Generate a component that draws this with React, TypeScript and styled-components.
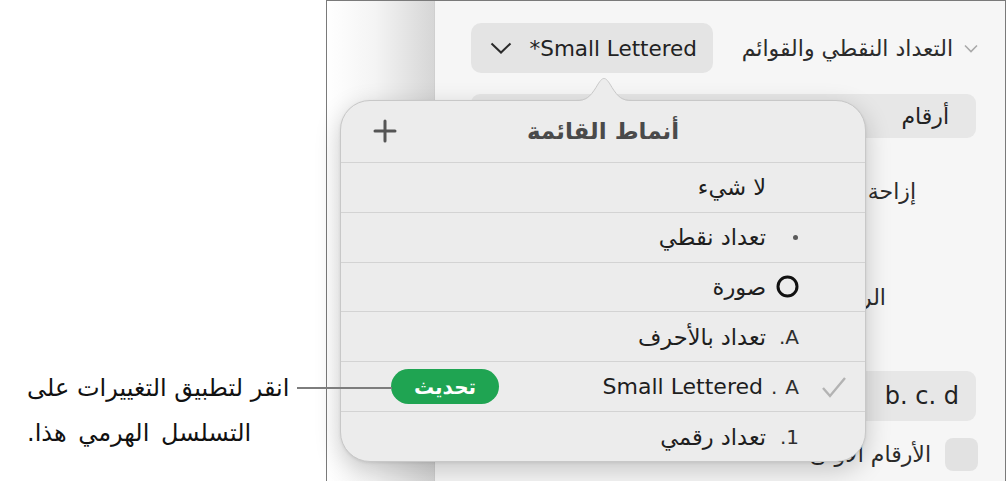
import React from "react";
import styled, { createGlobalStyle } from "styled-components";

const FONT = `"DejaVu Sans", "Noto Sans", sans-serif`;

const GlobalStyle = createGlobalStyle`
  html, body {
    margin: 0;
    padding: 0;
    background: #ffffff;
  }
  body {
    font-family: ${FONT};
    -webkit-font-smoothing: antialiased;
  }
`;

const Page = styled.div`
  position: relative;
  width: 1007px;
  height: 481px;
  display: flex;
  overflow: hidden;
  background: #ffffff;
`;

const Callout = styled.div`
  width: 326px;
  flex-shrink: 0;
  box-sizing: border-box;
  padding: 366px 0 0 27px;
`;

const CalloutText = styled.div`
  direction: rtl;
  text-align: left;
  white-space: nowrap;
  font-size: 24px;
  line-height: 45px;
  color: #111111;
`;

const CalloutLine = styled.span<{ $spread?: number }>`
  word-spacing: ${(p) => p.$spread ?? 0}px;
`;

const LeaderLine = styled.div`
  position: absolute;
  left: 297px;
  top: 387px;
  width: 95px;
  height: 1.5px;
  background: #7d7d7d;
  z-index: 5;
`;

const Frame = styled.div`
  position: relative;
  width: 680px;
  height: 481px;
  flex-shrink: 0;
  box-sizing: border-box;
  border: 1px solid #7a7a7a;
  border-bottom: none;
  display: flex;
`;

const Shade = styled.div`
  width: 107px;
  flex-shrink: 0;
  background: linear-gradient(to right, #ffffff 0%, #f4f4f4 45%, #d6d6d6 100%);
`;

const Inspector = styled.div`
  flex: 1;
  box-sizing: border-box;
  background: #f6f6f6;
  border-left: 1px solid #cfcfcf;
  padding: 22px 27px 0 36px;
  display: flex;
  flex-direction: column;
`;

const HeaderRow = styled.div`
  direction: rtl;
  height: 50px;
  display: flex;
  align-items: center;
`;

const SectionTitle = styled.div`
  margin-right: 11px;
  font-size: 22px;
  color: #2b2b2b;
  white-space: nowrap;
`;

const PopupButton = styled.div`
  margin-right: auto;
  width: 242px;
  height: 50px;
  box-sizing: border-box;
  border-radius: 10px;
  background: #e4e4e4;
  display: flex;
  align-items: center;
  justify-content: space-between;
  padding: 0 16px 0 19px;
  font-size: 21.5px;
  color: #222222;
`;

const LatinText = styled.span`
  direction: ltr;
  unicode-bidi: isolate;
  white-space: pre;
`;

const FieldButton = styled.div<{ $top: number; $height: number; $pad: number; $size: number }>`
  margin-top: ${(p) => p.$top}px;
  margin-right: 2px;
  height: ${(p) => p.$height}px;
  border-radius: 9px;
  background: #e7e7e7;
  display: flex;
  align-items: center;
  justify-content: flex-end;
  padding-right: ${(p) => p.$pad}px;
  font-size: ${(p) => p.$size}px;
  color: #222222;
`;

const LabelRow = styled.div<{ $top: number; $pad: number }>`
  margin-top: ${(p) => p.$top}px;
  height: 50px;
  direction: rtl;
  display: flex;
  align-items: center;
  padding-right: ${(p) => p.$pad}px;
  font-size: 22px;
  color: #2b2b2b;
`;

const CheckRow = styled.div`
  margin-top: 17px;
  height: 33px;
  direction: rtl;
  display: flex;
  align-items: center;
  gap: 14px;
  font-size: 22px;
  color: #2b2b2b;
`;

const CheckBox = styled.div`
  width: 33px;
  height: 33px;
  border-radius: 8px;
  background: #e2e2e2;
`;

const Popover = styled.div`
  position: absolute;
  left: 13px;
  top: 99px;
  width: 526px;
  height: 362px;
  box-sizing: border-box;
  border-radius: 30px;
  background: #ececec;
  border: 1px solid #c8c8c8;
  box-shadow: 0 8px 26px rgba(0, 0, 0, 0.2), 0 1px 3px rgba(0, 0, 0, 0.08);
  display: flex;
  flex-direction: column;
  z-index: 3;
`;

const Arrow = styled.svg`
  position: absolute;
  left: 235px;
  top: -24px;
`;

const PopHeader = styled.div`
  height: 61px;
  display: grid;
  grid-template-columns: 1fr auto 1fr;
  align-items: center;
  padding: 0 32px;
`;

const PopTitle = styled.div`
  font-size: 23px;
  font-weight: 700;
  color: #4a4a4a;
  direction: rtl;
`;

const StyleRow = styled.div`
  height: 49px;
  border-top: 1px solid #d3d3d3;
  direction: rtl;
  display: flex;
  align-items: center;
  padding: 0 18px 0 50px;
  font-size: 22px;
  color: #1e1e1e;
`;

const CheckCell = styled.div`
  width: 26px;
  height: 24px;
  display: flex;
  align-items: center;
  justify-content: center;
`;

const MarkerCell = styled.div`
  margin-right: 22px;
  min-width: 25px;
  display: flex;
  align-items: center;
  justify-content: flex-start;
  font-size: 20px;
  color: #2e2e2e;
`;

/* the dot sits on the left of the letter, as the RTL preview draws it */
const Label = styled.div<{ $gap?: number }>`
  direction: ltr;
  display: flex;
  align-items: baseline;
  gap: ${(p) => p.$gap ?? 0}px;
`;

const Dot = styled.span`
  width: 5px;
  height: 5px;
  margin-right: 1px;
  border-radius: 50%;
  background: #5a5a5a;
`;

const StyleName = styled.div<{ $latin?: boolean }>`
  margin-right: 8px;
  white-space: nowrap;
  font-size: ${(p) => (p.$latin ? 22 : 22.5)}px;
`;

const UpdatePill = styled.div`
  margin-right: auto;
  width: 108px;
  height: 35px;
  border-radius: 18px;
  background: #1fa452;
  color: #ffffff;
  font-size: 20px;
  font-weight: 700;
  display: flex;
  align-items: center;
  justify-content: center;
`;

const rows: { marker: React.ReactNode; name: string; latin?: boolean; checked?: boolean; update?: boolean }[] = [
  { marker: null, name: "لا شيء" },
  { marker: <Dot />, name: "تعداد نقطي" },
  {
    marker: (
      <svg width="23" height="23" viewBox="0 0 23 23">
        <circle cx="11.5" cy="11.5" r="9.5" fill="none" stroke="#111" strokeWidth="3" />
      </svg>
    ),
    name: "صورة",
  },
  {
    marker: (
      <Label>
        <span>.</span>
        <span>A</span>
      </Label>
    ),
    name: "تعداد بالأحرف",
  },
  {
    marker: (
      <Label $gap={8}>
        <span>.</span>
        <span>A</span>
      </Label>
    ),
    name: "Small Lettered",
    latin: true,
    checked: true,
    update: true,
  },
  {
    marker: (
      <Label>
        <span>.</span>
        <span>1</span>
      </Label>
    ),
    name: "تعداد رقمي",
  },
];

export default function App() {
  return (
    <Page>
      <GlobalStyle />
      <Callout>
        <CalloutText>
          <CalloutLine>انقر لتطبيق التغييرات على</CalloutLine>
          <br />
          <CalloutLine $spread={4}>التسلسل الهرمي هذا.</CalloutLine>
        </CalloutText>
      </Callout>
      <LeaderLine />
      <Frame>
        <Shade />
        <Inspector>
          <HeaderRow>
            <svg width="14" height="9" viewBox="0 0 14 9">
              <path d="M1 1.5 L7 7.5 L13 1.5" fill="none" stroke="#a9a9a9" strokeWidth="1.6" />
            </svg>
            <SectionTitle>التعداد النقطي والقوائم</SectionTitle>
            <PopupButton>
              <LatinText>*Small Lettered</LatinText>
              <svg width="22" height="12" viewBox="0 0 22 12">
                <path d="M1.5 1.5 L11 10.5 L20.5 1.5" fill="none" stroke="#2a2a2a" strokeWidth="2" />
              </svg>
            </PopupButton>
          </HeaderRow>
          <FieldButton $top={21} $height={44} $pad={27} $size={22}>
            <span style={{ direction: "rtl" }}>أرقام</span>
          </FieldButton>
          <LabelRow $top={28} $pad={62}>إزاحة</LabelRow>
          <LabelRow $top={56} $pad={92}>الرمز</LabelRow>
          <FieldButton $top={49} $height={50} $pad={17} $size={24}>
            <LatinText>b. c. d</LatinText>
          </FieldButton>
          <CheckRow>
            <CheckBox />
            <span>الأرقام الأولى</span>
          </CheckRow>
        </Inspector>

        <Popover>
          <Arrow width="56" height="26" viewBox="0 0 56 26">
            <path
              d="M0 24 C10 24 14 20.5 20 11 C24 4 26 2 28 2 C30 2 32 4 36 11 C42 20.5 46 24 56 24 L56 26 L0 26 Z"
              fill="#ececec"
            />
            <path
              d="M0 23.5 C10 23.5 14 20 20 10.5 C24 3.5 26 1.5 28 1.5 C30 1.5 32 3.5 36 10.5 C42 20 46 23.5 56 23.5"
              fill="none"
              stroke="#c8c8c8"
              strokeWidth="1"
            />
          </Arrow>
          <PopHeader>
            <svg width="24" height="24" viewBox="0 0 24 24">
              <path d="M12 2 V22 M2 12 H22" stroke="#555" strokeWidth="3" strokeLinecap="round" />
            </svg>
            <PopTitle>أنماط القائمة</PopTitle>
            <span />
          </PopHeader>
          {rows.map((r) => (
            <StyleRow key={r.name}>
              <CheckCell>
                {r.checked && (
                  <svg width="26" height="24" viewBox="0 0 26 24">
                    <path d="M2 13 L9 21 L24 3" fill="none" stroke="#b3b3b3" strokeWidth="2.4" />
                  </svg>
                )}
              </CheckCell>
              <MarkerCell>{r.marker}</MarkerCell>
              <StyleName $latin={r.latin}>{r.name}</StyleName>
              {r.update && <UpdatePill>تحديث</UpdatePill>}
            </StyleRow>
          ))}
        </Popover>
      </Frame>
    </Page>
  );
}
